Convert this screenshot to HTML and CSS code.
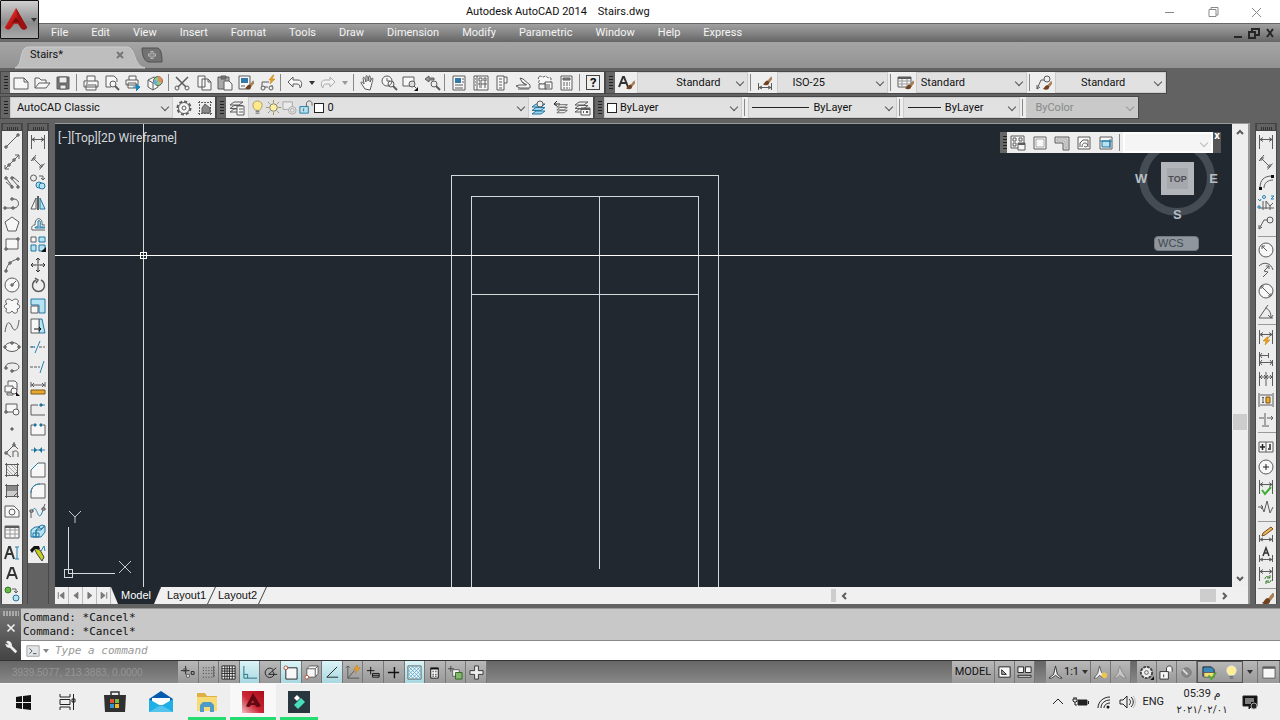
FILE: index.html
```html
<!DOCTYPE html>
<html lang="en">
<head>
<meta charset="utf-8">
<title>Autodesk AutoCAD 2014 - Stairs.dwg</title>
<link rel="stylesheet" href="styles.css">
</head>
<body>
<svg class="sprite" aria-hidden="true">
  <defs>
    <linearGradient id="red" x1="0" y1="0" x2="1" y2="1"><stop offset="0" stop-color="#f04030"/><stop offset=".5" stop-color="#c01818"/><stop offset="1" stop-color="#700808"/></linearGradient>
    <linearGradient id="redtile" x1="0" y1="1" x2="1" y2="0"><stop offset="0" stop-color="#f3bcc0"/><stop offset=".45" stop-color="#cc2636"/><stop offset="1" stop-color="#a80c1c"/></linearGradient>
  </defs>
  <symbol id="brush" viewBox="0 0 16 16"><path d="M15 3l-5 6 2 2 4-5z" fill="#b08050" stroke="#765030" stroke-width=".5"/><path d="M10 8c-3 0-3 3-6 5 4 3 9 1 8-3z" fill="#71401f" stroke="none"/></symbol>
  <symbol id="dim" viewBox="0 0 16 16"><path d="M1.5 1v14M14.5 1v14M2 5.5h12M5 3.5L2 5.5l3 2M11 3.5l3 2-3 2"/></symbol>
  <symbol id="dimlow" viewBox="0 0 16 16"><path d="M1.5 8v7M14.5 8v7M2 12.5h12M5 11l-3 1.5L5 14M11 11l3 1.5-3 1.5"/></symbol>
  <symbol id="aligned" viewBox="0 0 16 16"><path d="M3 4l9 9M1 7l5-6M9.5 15.5l5-6M3 7V4h3M12 10v3H9"/></symbol>
  <symbol id="sheets" viewBox="0 0 16 16"><path d="M1 5l4-3h9l-4 3zM1 8.5l4-3h9l-4 3zM1 12l4-3h9l-4 3z"/></symbol>
  <symbol id="alogo" viewBox="0 0 28 28"><path d="M14 1L9 10 2 22c2 3 5 3 7 0l3-4h4l3 4c2 3 5 3 7 0l-7-12z" fill="url(#red)" stroke="none"/><path d="M14 1l2 12 3 9c2 3 5 3 7 0l-7-12z" fill="#9c1212" stroke="none"/><path d="M14 11l-5 7c3-2 7-2 10 0z" fill="#7a0c0c" stroke="none"/></symbol>
</svg>

<header>
  <div class="titlebar">
    <h1>Autodesk AutoCAD 2014 &nbsp;&nbsp; Stairs.dwg</h1>
    <div class="wincontrols">
      <button aria-label="Minimize"><svg viewBox="0 0 16 16"><path d="M3 8.500h9"/></svg></button>
      <button aria-label="Restore"><svg viewBox="0 0 16 16"><path d="M4 5.500h7v7H4zM6 5V3.500h7V11h-2"/></svg></button>
      <button aria-label="Close"><svg viewBox="0 0 16 16"><path d="M4 4l9 9M13 4l-9 9"/></svg></button>
    </div>
  </div>
  <button class="appbutton" aria-label="Application menu"><svg class="a" viewBox="0 0 28 28"><use href="#alogo"/></svg><i class="tri"></i></button>
  <nav class="menubar">
    <button>File</button><button>Edit</button><button>View</button><button>Insert</button><button>Format</button><button>Tools</button><button>Draw</button><button>Dimension</button><button>Modify</button><button>Parametric</button><button>Window</button><button>Help</button><button>Express</button>
    <div class="doccontrols">
      <button aria-label="Minimize drawing"><svg viewBox="0 0 16 16"><path d="M4 12h8"/></svg></button>
      <button aria-label="Restore drawing"><svg viewBox="0 0 16 16"><path d="M3 7h6v6H3zM6 6V4h7v6h-3"/></svg></button>
      <button aria-label="Close drawing"><svg viewBox="0 0 16 16"><path d="M5 4l6 8M11 4l-6 8"/></svg></button>
    </div>
  </nav>
  <div class="filetabs">
    <svg class="tabshape" viewBox="0 0 130 22" preserveAspectRatio="none" aria-hidden="true"><path d="M0 22C8 20 4 1 13 1H112C121 1 118 20 130 22z"/></svg>
    <button class="filetab">Stairs*</button><button class="fileclose" aria-label="Close Stairs"><svg viewBox="0 0 16 16"><path d="M5 5l6 6M11 5l-6 6"/></svg></button>
    <button class="newtab" aria-label="New drawing"><svg viewBox="0 0 22 16"><path d="M1 1h15c3 0 5 4 5 14H8C4 15 1 9 1 1z" fill="#727272" stroke="#505050"/><path d="M11 4v8M7 8h8" stroke="#b5b5b5" stroke-width="3"/><path d="M11 5v6M8 8h6" stroke="#777"/></svg></button>
  </div>
</header>

<div class="toolbars">
  <div class="row">
    <div class="bar standard"><i class="grip"></i>
      <button aria-label="New"><svg viewBox="0 0 16 16"><path class="w" d="M1 3h10l4 4v7H1zM11 3v4h4"/></svg></button>
      <button aria-label="Open"><svg viewBox="0 0 16 16"><path class="w" d="M1 13V3h4l2 2h5v3M1 13l4-5h11l-4 5z"/></svg></button>
      <button aria-label="Save"><svg viewBox="0 0 16 16"><path d="M2 2h12v12H2z" fill="#777"/><path d="M4 2h8v6H4zM5 10h6v4H5z" fill="#eee"/></svg></button>
      <i class="sep"></i>
      <button aria-label="Plot"><svg viewBox="0 0 16 16"><path class="w" d="M4 6V1h8v5M1 6h14v6H1zM3 10h10v5H3zM3 8h2"/></svg></button>
      <button aria-label="Plot preview"><svg viewBox="0 0 16 16"><path class="w" d="M13 7V4l-3-3H2v11h5"/><circle cx="9" cy="9" r="3"/><path d="M11 11l4 4" stroke-width="2"/></svg></button>
      <button aria-label="Publish"><svg viewBox="0 0 16 16"><path class="w" d="M4 5V1h7v4M1 5h12v5H1zM3 8h8v5H3z"/><path d="M8 12h5M11 9l4 3-4 4" fill="#1786bd" stroke="#1786bd"/></svg></button>
      <button aria-label="3D print"><svg viewBox="0 0 16 16"><path class="w" d="M1 5l6-3 4 2v8l-5 3-5-3zM1 5l5 3v7"/><circle cx="11" cy="6" r="4.500" fill="#8bcf80"/><path d="M11 1a5 5 0 0 1 4 7l-4-2z" fill="#e28a60" stroke="none"/><path d="M7 5a4 4 0 0 0 2 5l2-4z" fill="#70a8e0" stroke="none"/></svg></button>
      <i class="sep"></i>
      <button aria-label="Cut"><svg viewBox="0 0 16 16"><path d="M2 2l10 10M14 2L4 12" stroke-width="1.500"/><circle cx="3" cy="13" r="2"/><circle cx="13" cy="13" r="2"/></svg></button>
      <button aria-label="Copy"><svg viewBox="0 0 16 16"><path class="w" d="M2 1h7v11H2zM6 4h6l3 3v8H6zM12 4v3h3"/></svg></button>
      <button aria-label="Paste"><svg viewBox="0 0 16 16"><path d="M1 2h11v12H1z" fill="#aaa"/><path d="M4 1h5v3H4z" fill="#777"/><path class="w" d="M7 6h5l3 3v6H7z"/></svg></button>
      <button aria-label="Match properties"><svg viewBox="0 0 16 16"><path class="w" d="M1 1h11v13H1z"/><path d="M3 3h7v5H3z" fill="#3478a8" stroke="none"/><path d="M3 11h4"/><use href="#brush" x="4" y="3" width="12" height="13"/></svg></button>
      <button aria-label="Block editor"><svg viewBox="0 0 16 16"><path d="M9 7H2v5h6M12 10v4"/><circle cx="3" cy="13" r="2" fill="#eee"/><circle cx="11" cy="13" r="2" fill="#eee"/><path d="M13 0L9 5h2l-1 4 5-5h-3l2-4z" class="o"/></svg></button>
      <i class="sep"></i>
      <button aria-label="Undo"><svg viewBox="0 0 16 16"><path class="w" d="M1 7l5-5v3h5c5 0 4 7 2 8 0-3-1-4-3-4H6v3z"/></svg></button>
      <button class="drop" aria-label="Undo list"><i class="tri"></i></button>
      <button class="off" aria-label="Redo"><svg viewBox="0 0 16 16"><path class="w" d="M15 7l-5-5v3H5C0 5 1 12 3 13c0-3 1-4 3-4h4v3z"/></svg></button>
      <button class="drop off" aria-label="Redo list"><i class="tri"></i></button>
      <i class="sep"></i>
      <button aria-label="Pan"><svg viewBox="0 0 16 16"><path class="w" d="M5 14L1 8c0-2 2-1 3 1L3 3c1-2 2 0 3 4V1c1-1 2 0 2 5l1-5c2-1 1 2 1 6l2-4c2 0 0 4-1 9l-1 3z"/></svg></button>
      <button aria-label="Zoom realtime"><svg viewBox="0 0 16 16"><circle class="w" cx="6" cy="6" r="5"/><path d="M6 3v3h3"/><circle cx="10" cy="9" r="3"/><path d="M12 11l4 4" stroke-width="2"/></svg></button>
      <button aria-label="Zoom window"><svg viewBox="0 0 16 16"><path class="w" d="M1 2h11v9H1z"/><circle cx="10" cy="9" r="3" fill="#ddd"/><path d="M12 11l2 2"/><path class="k" d="M16 12v4h-4z"/></svg></button>
      <button aria-label="Zoom previous"><svg viewBox="0 0 16 16"><path d="M1 4l4-3v2h5v2H5v2z" fill="#999"/><circle cx="10" cy="9" r="3"/><path d="M12 11l4 4" stroke-width="2"/></svg></button>
      <i class="sep"></i>
      <button aria-label="Properties"><svg viewBox="0 0 16 16"><path class="w" d="M2 1h12v14H2z"/><path d="M4 3h6v5H4z" fill="#3478a8" stroke="none"/><path d="M11 4h2M11 7h2M4 10h8M4 13h8"/></svg></button>
      <button aria-label="DesignCenter"><svg viewBox="0 0 16 16"><path class="w" d="M1 1h14v14H1zM4 1v14"/><path d="M6 3h3v3H6zM11 3h2v3h-2zM6 8h3v2H6zM11 8h2v2h-2zM6 12h3M11 12h2M2 4h1M2 7h1M2 10h1"/></svg></button>
      <button aria-label="Tool palettes"><svg viewBox="0 0 16 16"><path class="w" d="M3 1h7v14H3zM10 2h3v6h-3"/><path d="M5 4h3M5 7h3M5 10h3M5 13h3"/></svg></button>
      <button aria-label="Sheet set manager"><svg viewBox="0 0 16 16"><path class="w" d="M1 11l4 2h10v-3L8 4 5 3l2 4 4 3H4z"/><path d="M3 14h11M7 7l5 3"/></svg></button>
      <button aria-label="Markup set manager"><svg viewBox="0 0 16 16"><path class="w" d="M2 2c1-2 3 0 4 0s3-2 4 0 4-1 4 2-1 3 0 5H3c-3-1 0-3-1-4s-1-2 0-3z" stroke-dasharray="3 1"/><path class="w" d="M2 9h7v5H2zM8 7h7v7H8zM10 10h3M10 12h3"/></svg></button>
      <button aria-label="Calculator"><svg viewBox="0 0 16 16"><path class="w" d="M3 1h11v14H3z"/><path d="M5 3h7v2H5z" fill="#888"/><path d="M5 8h2M8 8h2M11 8h1M5 10h2M8 10h2M11 10h1M5 13h2M8 13h2M11 13h1"/></svg></button>
      <i class="sep"></i>
      <button aria-label="Help"><span class="helpkey">?</span></button>
    </div>
    <div class="bar styles"><i class="grip"></i>
      <button aria-label="Text style"><svg viewBox="0 0 16 16"><path d="M1 12L5 2h1l4 10M3 8h5" stroke="#333" stroke-width="2"/><use href="#brush" x="5" y="3" width="12" height="13"/></svg></button>
      <label class="combo indent"><select aria-label="Text style"><option>Standard</option></select></label><i class="sep"></i>
      <button aria-label="Dimension style"><svg viewBox="0 0 16 16"><use href="#dimlow"/><use href="#brush" x="3" y="-1" width="12" height="13"/></svg></button>
      <label class="combo dimstyle"><select aria-label="Dimension style"><option>ISO-25</option></select></label><i class="sep"></i>
      <button aria-label="Table style"><svg viewBox="0 0 16 16"><path class="w" d="M1 2h13v10H1z"/><path d="M1 6h13M1 9h13M5 4v8M10 4v8" stroke="#999"/><path d="M1 3h13" stroke-width="2"/><use href="#brush" x="5" y="3" width="12" height="13"/></svg></button>
      <label class="combo"><select aria-label="Table style"><option>Standard</option></select></label><i class="sep"></i>
      <button aria-label="Multileader style"><svg viewBox="0 0 16 16"><path d="M1 14L5 5h3M1 10v4l3-2"/><circle cx="11" cy="4" r="3" fill="#eee"/><use href="#brush" x="4" y="4" width="12" height="12"/></svg></button>
      <label class="combo leader"><select aria-label="Multileader style"><option>Standard</option></select></label>
    </div>
  </div>
  <div class="row">
    <div class="bar workspace"><i class="grip"></i>
      <label class="combo"><select aria-label="Workspace"><option>AutoCAD Classic</option></select></label>
      <button aria-label="Workspace settings"><svg viewBox="0 0 16 16"><circle cx="8" cy="8" r="6.500" stroke-dasharray="3 2" stroke-width="2"/><circle class="w" cx="8" cy="8" r="5.500"/><circle cx="8" cy="8" r="2"/></svg></button>
      <button aria-label="My workspace"><svg viewBox="0 0 16 16"><path d="M1 2.500h14M1 13.500h14M2.500 1v14M13.500 1v14" stroke-dasharray="2 1"/><path d="M5 13V8l3-4 5 4v5z" fill="#888"/></svg></button>
    </div>
    <div class="bar layers"><i class="grip"></i>
      <button aria-label="Layer properties"><svg viewBox="0 0 16 16"><use href="#sheets"/><path class="w" d="M8 6h7v9H8zM10 9h4M10 12h4"/></svg></button>
      <div class="combo layer">
        <svg viewBox="0 0 16 16"><path d="M6 11C1 7 3 1 8 1s7 6 2 10z" fill="#ffe98c" stroke="#a99960"/><path d="M6 12h4M6 14h4"/></svg>
        <svg viewBox="0 0 16 16"><circle cx="8" cy="8" r="4" fill="#fff0a0" stroke="#777"/><path d="M8 0v3M8 13v3M0 8h3M13 8h3M2 2l2 2M12 12l2 2M14 2l-2 2M4 12l-2 2" stroke="#a09050"/></svg>
        <svg class="off" viewBox="0 0 16 16"><path class="w" d="M1 2h10v8H1z"/><circle class="w" cx="11" cy="11" r="4"/><circle cx="11" cy="11" r="2"/></svg>
        <svg viewBox="0 0 16 16"><path class="bf" d="M2 7h9v7H2z"/><path d="M9 7V4c0-4 6-4 6 0v2M6 9v3"/></svg>
        <i class="swatch"></i><select aria-label="Layer"><option>0</option></select>
      </div>
      <button aria-label="Make layer current"><svg viewBox="0 0 16 16"><g stroke="#2677a0" fill="#9bd2ec"><use href="#sheets" y="2"/></g><circle cx="9" cy="4" r="3" fill="#eee"/></svg></button>
      <button aria-label="Layer previous"><svg viewBox="0 0 16 16"><use href="#sheets" x="3" y="3" width="13" height="13"/><path d="M7 4H1l3-3M1 4l3 2" stroke="#222"/></svg></button>
      <button aria-label="Layer states"><svg viewBox="0 0 16 16"><use href="#sheets"/><path class="w" d="M7 8h9v7H7z"/><path d="M7 9h9M9 12h1M12 12h2" stroke-width="2"/></svg></button>
    </div>
    <div class="bar props"><i class="grip"></i>
      <label class="combo p1"><i class="swatch"></i><select aria-label="Color"><option>ByLayer</option></select></label><i class="sep"></i>
      <label class="combo p2"><i class="ltype long"></i><select aria-label="Linetype"><option>ByLayer</option></select></label><i class="sep"></i>
      <label class="combo p3"><i class="ltype"></i><select aria-label="Lineweight"><option>ByLayer</option></select></label><i class="sep"></i>
      <label class="combo p4 disabled"><select aria-label="Plot style" disabled><option>ByColor</option></select></label>
    </div>
  </div>
</div>

<main>
  <div class="tools" role="toolbar" aria-label="Draw"><i class="tophandle"></i>
    <button aria-label="Line"><svg viewBox="0 0 16 16"><path d="M2 14L14 2"/><path class="n" d="M1 13h2v2H1zM13 1h2v2h-2z"/></svg></button>
    <button aria-label="Construction line"><svg viewBox="0 0 16 16"><path d="M1 15L15 1M1 11v4h4M11 1h4v4"/><path class="n" d="M4 10h2v2H4zM9 5h2v2H9z"/></svg></button>
    <button aria-label="Multiline"><svg viewBox="0 0 16 16"><path d="M2 4l6 8M7 4l7 8M2 8l6 5M9 3l6 5"/><path class="n" d="M1 3h2v2H1zM7 12h2v2H7zM7 3h2v2H7zM13 12h2v2h-2z"/></svg></button>
    <button aria-label="Polyline"><svg viewBox="0 0 16 16"><path d="M1 13h9c6 0 6-9 0-9H8"/><path class="n" d="M0 12h2v2H0zM8 12h2v2H8zM7 3h2v2H7z"/></svg></button>
    <button aria-label="Polygon"><svg viewBox="0 0 16 16"><path class="w" d="M8 1l7 5-3 9H4L1 6z"/></svg></button>
    <button aria-label="Rectangle"><svg viewBox="0 0 16 16"><path class="w" d="M2 3h12v10H2z"/><path class="n" d="M1 12h2v2H1zM13 2h2v2h-2z"/></svg></button>
    <button aria-label="Arc"><svg viewBox="0 0 16 16"><path d="M2 14C3 8 6 4 14 2"/><path class="n" d="M1 13h2v2H1zM5 5h2v2H5zM13 1h2v2h-2z"/></svg></button>
    <button aria-label="Circle"><svg viewBox="0 0 16 16"><circle class="w" cx="8" cy="8" r="7"/><path d="M8 8l4-4"/><path class="n" d="M7 7h2v2H7z"/></svg></button>
    <button aria-label="Revision cloud"><svg viewBox="0 0 16 16"><path class="w" d="M3 6C-1 2 5-1 8 3c3-4 9-1 5 3 4 1 3 5 0 5 2 4-3 6-5 2-3 4-8 1-5-2-4-1-3-5 0-5z"/></svg></button>
    <button aria-label="Spline"><svg viewBox="0 0 16 16"><path d="M1 14C3 1 6 4 8 9s6 4 7-7"/></svg></button>
    <button aria-label="Ellipse"><svg viewBox="0 0 16 16"><ellipse class="w" cx="8" cy="8" rx="7" ry="4.500"/><path class="n" d="M0 7h2v2H0zM14 7h2v2h-2zM7 3h2v2H7z"/></svg></button>
    <button aria-label="Ellipse arc"><svg viewBox="0 0 16 16"><path d="M2 9C-1 3 15 2 15 8c0 3-4 4-7 4"/><path class="n" d="M1 8h2v2H1zM7 11h2v2H7z"/></svg></button>
    <button aria-label="Insert block"><svg viewBox="0 0 16 16"><path class="w" d="M4 5V1h7l2 2v7H9M1 6h8v6H1zM3 13h6v2H3z"/><circle class="w" cx="10" cy="11" r="3"/><path class="k" d="M12 12l4 4h-4z"/></svg></button>
    <button aria-label="Make block"><svg viewBox="0 0 16 16"><path class="w" d="M2 3h11v8H2z"/><circle class="w" cx="12" cy="11" r="3"/><path class="n" d="M1 10h2v2H1z"/></svg></button>
    <button aria-label="Point"><svg viewBox="0 0 16 16"><path d="M7 7h2v2H7z" fill="#777"/></svg></button>
    <button aria-label="Divide"><svg viewBox="0 0 16 16"><path d="M2 11l8-8 4 4M2 11l5 4M10 3V0M9 15V9M9 10c2-2 5-1 5 1v4"/><path class="n" d="M1 10h2v2H1zM9 2h2v2H9z"/></svg></button>
    <button aria-label="Hatch"><svg viewBox="0 0 16 16"><path d="M3 7l6 6M3 3l10 10M7 3l6 6M3 10l3 3M10 3l3 3" stroke="#aaa"/><path d="M1 2.500h14M1 13.500h14M2.500 1v14M13.500 1v14M9 14l5-5"/></svg></button>
    <button aria-label="Gradient"><svg viewBox="0 0 16 16"><path d="M3 3h10v5H3z" fill="#888" stroke="none"/><path d="M3 8h10v5H3z" fill="#ccc" stroke="none"/><path d="M1 2.500h14M1 13.500h14M2.500 1v14M13.500 1v14M9 14l5-5"/></svg></button>
    <button aria-label="Region"><svg viewBox="0 0 16 16"><path class="w" d="M1 3h9l5 5v6H1z"/><circle cx="8" cy="9" r="3"/></svg></button>
    <button aria-label="Table"><svg viewBox="0 0 16 16"><path class="w" d="M1 2h14v12H1z"/><path d="M1 6h14M1 10h14M6 3v11M11 3v11" stroke="#999"/><path d="M1 3h14" stroke-width="2"/></svg></button>
    <button aria-label="Multiline text"><svg viewBox="0 0 16 16"><path d="M1 14L5 2h1l4 12M3 9h6" stroke="#333" stroke-width="2"/><path class="b" d="M13 2v12M11 2h4M11 14h4"/></svg></button>
    <button aria-label="Single line text"><svg viewBox="0 0 16 16"><path d="M3 14L7 3h2l4 11M5 10h6" stroke="#333" stroke-width="2"/></svg></button>
    <button aria-label="Add selected"><svg viewBox="0 0 16 16"><circle cx="4" cy="4" r="3" fill="#67b847" stroke="#397d27"/><circle class="bf" cx="12" cy="12" r="3"/><path d="M8 3h4v4M10 5l2 2 2-2"/></svg></button>
  </div>
  <div class="tools" role="toolbar" aria-label="Modify"><i class="tophandle"></i>
    <button aria-label="Linear dimension"><svg viewBox="0 0 16 16"><use href="#dim" y="1"/></svg></button>
    <button aria-label="Aligned dimension"><svg viewBox="0 0 16 16"><use href="#aligned"/></svg></button>
    <button aria-label="Copy object"><svg viewBox="0 0 16 16"><circle cx="3.500" cy="4" r="3"/><circle class="bf" cx="9" cy="11" r="3"/><circle class="bf" cx="12" cy="12" r="3"/><path d="M9 2h4v4M11 4l2 2 2-2"/></svg></button>
    <button aria-label="Mirror"><svg viewBox="0 0 16 16"><path class="w" d="M6 3v11H1z"/><path class="bf" d="M10 3v11h5z"/><path d="M8 1v14" stroke-width="2"/></svg></button>
    <button aria-label="Offset"><svg viewBox="0 0 16 16"><path class="w" d="M15 14H2c-1-4 1-5 3-5 0-9 8-8 7 0h3"/><path class="bf" d="M15 12H5c0-2 2-1 3-1V5c2-2 3 1 2 6h5"/></svg></button>
    <button aria-label="Array"><svg viewBox="0 0 16 16"><path class="w" d="M1 1h5v5H1z"/><path class="bf" d="M9 1h6v5H9zM1 9h5v6H1zM9 9h6v4l-3 2H9z"/><path class="k" d="M16 11v5h-5z"/></svg></button>
    <button aria-label="Move"><svg viewBox="0 0 16 16"><path d="M8 1v5M8 10v5M1 8h5M10 8h5M6 3l2-2 2 2M6 13l2 2 2-2M3 6L1 8l2 2M13 6l2 2-2 2" stroke="#333"/><path d="M7 7h2v2H7z"/></svg></button>
    <button aria-label="Rotate"><svg viewBox="0 0 16 16"><path d="M6 3a6 6 0 1 0 5 0M5 1l3 2-2 3" stroke-width="1.500"/></svg></button>
    <button aria-label="Scale"><svg viewBox="0 0 16 16"><path class="bf" d="M1 1h14v14H9V7H1z"/><path class="w" d="M1 8h7v7H1z"/></svg></button>
    <button aria-label="Stretch"><svg viewBox="0 0 16 16"><path class="bf" d="M9 1h3l3 14H9z"/><path class="w" d="M1 1h8v14H1z"/><path d="M4 11h7M9 9l2 2-2 2" stroke="#111"/></svg></button>
    <button aria-label="Trim"><svg viewBox="0 0 16 16"><path d="M0 8h5M9 8h6" stroke-dasharray="3 1"/><path class="b" d="M5 14L10 2M1 8h4"/></svg></button>
    <button aria-label="Extend"><svg viewBox="0 0 16 16"><path d="M0 8h10" stroke-dasharray="3 1"/><path class="b" d="M10 14l4-12"/></svg></button>
    <button aria-label="Measure"><svg viewBox="0 0 16 16"><path d="M1 2v5M15 2v5M1 5h14M4 3L2 5l2 2M12 3l2 2-2 2"/><path d="M1 10h14v4H1z" fill="#e8a82b" stroke="#7a5a18"/></svg></button>
    <button aria-label="Break at point"><svg viewBox="0 0 16 16"><path d="M8 4H1v10h14"/><path class="b" d="M10 4h5"/><path class="n bl" d="M10 3h2v2h-2z"/></svg></button>
    <button aria-label="Break"><svg viewBox="0 0 16 16"><path class="w" d="M3 4H1v10h14V4h-2"/><path class="n bl" d="M4 3h2v2H4zM10 3h2v2h-2z"/></svg></button>
    <button aria-label="Join"><svg viewBox="0 0 16 16"><path class="b" d="M1 8h14"/><path d="M4 5l3 3-3 3zM12 5L9 8l3 3z" fill="#1e7195" stroke="none"/></svg></button>
    <button aria-label="Chamfer"><svg viewBox="0 0 16 16"><path class="w" d="M1 15V8l7-7h7v14z"/><path class="b" d="M1 8l7-7"/></svg></button>
    <button aria-label="Fillet"><svg viewBox="0 0 16 16"><path class="w" d="M1 15v-5C1 4 5 1 10 1h5v14z"/><path class="b" d="M1 10c0-6 4-9 9-9"/></svg></button>
    <button aria-label="Blend curves"><svg viewBox="0 0 16 16"><path class="b" d="M2 8c5-9 5 9 9 4l3-7"/><path d="M1 15V8M15 1l-2 5"/><path class="n" d="M0 7h3v2H0zM12 5h3v2h-3z"/></svg></button>
    <button aria-label="Explode"><svg viewBox="0 0 16 16"><path class="bf" d="M1 6l4-3h5L6 6v7H1zM6 6h5l4-4v6l-4 5H6zM8 3l4-2 3 1-4 3zM3 9h6v4H3z"/></svg></button>
    <button aria-label="Edit"><svg viewBox="0 0 16 16"><path d="M4 3l3 6 5 7 2-4-4-7z" fill="#c7cf21" stroke="#444"/><path class="k" d="M0 5l4-4h5l1 3H5L2 8z"/><path class="b" d="M11 6l3-5 1 5"/></svg></button>
  </div>

  <section class="drawing">
    <div class="canvas">
      <svg class="plan" viewBox="0 0 1177 463" preserveAspectRatio="xMinYMin slice" role="img" aria-label="Stair plan">
        <g class="lines">
          <path d="M396.500 463V51.500H663.500V463M416 463V72.500H643.500V463M416.500 170.500H643.500M544.500 72V445"/>
          <path d="M88.500 0V463"/><path d="M0 131.500H1177" stroke="#fff"/><path d="M85.500 128.500h6v6h-6z" stroke="#fff"/>
          <path d="M13.500 403V449.500H60M9.500 445.500h8v8h-8z"/>
        </g>
        <path class="axis" d="M14 387l6 6 6-6M20 393v6M64 437l12 12M76 437l-12 12"/>
      </svg>
      <div class="viewlabel"><button>[−]</button><button>[Top]</button><button>[2D Wireframe]</button></div>
      <div class="viewcube">
        <svg viewBox="0 0 90 76" aria-hidden="true"><circle cx="45" cy="33" r="34"/></svg>
        <button class="top">TOP</button><b class="west">W</b><b class="east">E</b><b class="south">S</b>
      </div>
      <button class="wcs">WCS</button>
      <div class="viewports"><i class="grip"></i>
        <button aria-label="Viewports dialog"><svg viewBox="0 0 16 16"><path class="w" d="M1 1h13v12H1z"/><path d="M3 3h3v3H3zM9 3h3v3H9zM3 8h3v3H3z"/><path class="w" d="M8 8h7v7H8z"/><path d="M8 9h7" stroke-width="2"/></svg></button>
        <button aria-label="Single viewport"><svg viewBox="0 0 16 16"><path class="w" d="M2 2h12v12H2z"/><path d="M4 4h8v8H4z" stroke="#aaa"/></svg></button>
        <button aria-label="Polygonal viewport"><svg viewBox="0 0 16 16"><path d="M1 2h14v13H9V8H1z" fill="#ddd"/><path d="M3 4h10v9h-2V6H3z" stroke="#aaa"/></svg></button>
        <button aria-label="Object viewport"><svg viewBox="0 0 16 16"><path class="w" d="M2 2h12v12H2z"/><path d="M4 12V8l3-3h5v7M6 12c0-4 3-5 5-3s-2 4-3 2"/></svg></button>
        <button aria-label="Clip viewport"><svg viewBox="0 0 16 16"><path class="w" d="M2 2h12v12H2z"/><path class="bf" d="M4 6h8v6H4zM2 6h12M12 4v9"/></svg></button>
        <i class="sep"></i>
        <label class="combo white"><select aria-label="Viewport scale" disabled><option></option></select></label>
        <button class="closex" aria-label="Close toolbar">x</button>
      </div>
    </div>
    <div class="vscroll">
      <button aria-label="Scroll up"><svg viewBox="0 0 16 16"><path d="M5 10l3-3 3 3"/></svg></button>
      <i class="thumb"></i>
      <button aria-label="Scroll down"><svg viewBox="0 0 16 16"><path d="M5 6l3 3 3-3"/></svg></button>
    </div>
    <div class="layouts">
      <div class="navs">
        <button aria-label="First"><svg viewBox="0 0 16 16"><path d="M4 4v8"/><path d="M11 4v8L6 8z" class="g"/></svg></button>
        <button aria-label="Previous"><svg viewBox="0 0 16 16"><path d="M11 4v8L6 8z" class="g"/></svg></button>
        <button aria-label="Next"><svg viewBox="0 0 16 16"><path d="M6 4v8l5-4z" class="g"/></svg></button>
        <button aria-label="Last"><svg viewBox="0 0 16 16"><path d="M12 4v8"/><path d="M5 4v8l5-4z" class="g"/></svg></button>
      </div>
      <button class="ltab model">Model</button><button class="ltab">Layout1</button><button class="ltab">Layout2</button>
      <div class="hscroll">
        <i class="split"></i>
        <button class="left" aria-label="Scroll left"><svg viewBox="0 0 16 16"><path d="M10 5L7 8l3 3"/></svg></button>
        <i class="thumb"></i>
        <button aria-label="Scroll right"><svg viewBox="0 0 16 16"><path d="M7 5l3 3-3 3"/></svg></button>
      </div>
    </div>
  </section>

  <div class="tools dims" role="toolbar" aria-label="Dimension"><i class="tophandle"></i>
    <button aria-label="Linear"><svg viewBox="0 0 16 16"><use href="#dim" y="1"/></svg></button>
    <button aria-label="Aligned"><svg viewBox="0 0 16 16"><use href="#aligned"/></svg></button>
    <button aria-label="Arc length"><svg viewBox="0 0 16 16"><path d="M2 14C2 6 6 2 14 2M6 14c0-5 4-8 9-8"/><path class="k" d="M1 13h3v3H1zM13 1h3v3h-3z"/></svg></button>
    <button aria-label="Ordinate"><svg viewBox="0 0 16 16"><path d="M5 6v9M1 13h15M8 6v8M8 6l4 5 3-3M12 11v4"/><circle class="b" cx="6" cy="2" r="1.500"/><path class="b" d="M0 4l2 2 1-2M13 1h3l-3 3h3M0 11h2v2H0z"/></svg></button>
    <button aria-label="Leader"><svg viewBox="0 0 16 16"><path d="M1 14L6 5h4M1 10v4l3-2"/><circle cx="12" cy="5" r="3"/></svg></button>
    <hr>
    <button aria-label="Radius"><svg viewBox="0 0 16 16"><circle class="w" cx="8" cy="8" r="7"/><path d="M9 9L4 4M4 7V4h3"/></svg></button>
    <button aria-label="Jogged"><svg viewBox="0 0 16 16"><path d="M1 4c5-5 12-3 14 4M5 15l5-5-4-1 5-5M8 4h3v3"/></svg></button>
    <button aria-label="Diameter"><svg viewBox="0 0 16 16"><circle class="w" cx="8" cy="8" r="7"/><path d="M3 3l10 10M3 6V3h3M13 10v3h-3"/></svg></button>
    <button aria-label="Angular"><svg viewBox="0 0 16 16"><path d="M15 14H1L10 1M7 4c4 1 6 4 6 10M10 11l3 3 2-3"/></svg></button>
    <hr>
    <button aria-label="Quick dimension"><svg viewBox="0 0 16 16"><use href="#dim" y="-1"/><path class="o" d="M9 7l-4 4h3l-1 4 5-5H9l2-3z"/></svg></button>
    <button aria-label="Baseline"><svg viewBox="0 0 16 16"><path d="M1.500 1v14M10.500 2v5M14.500 9v6M2 4.500h8M2 11.500h12M4 2L2 4.500 4 7M12 9l2 2.500-2 2.500M4 9l-2 2.500L4 14"/></svg></button>
    <button aria-label="Continue"><svg viewBox="0 0 16 16"><path d="M1.500 1v14M8 1v14M14.500 1v14M2 6h12M4 4L2 6l2 2M6 4l2 2-2 2M10 4L8 6l2 2M12 4l2 2-2 2"/></svg></button>
    <button aria-label="Dimension space"><svg viewBox="0 0 16 16"><path d="M1 1v14M15 1v14M2 3h12M2 13h12M5 5v6M4 6l1-1 1 1M4 10l1 1 1-1"/><path d="M8 5h4v6H8z" fill="#edac20" stroke="#765020"/></svg></button>
    <button aria-label="Dimension break"><svg viewBox="0 0 16 16"><path d="M1 6h5M9 6h6M13 4l2 2-2 2M7 1v12M4 14h7" /></svg></button>
    <hr>
    <button aria-label="Tolerance"><svg viewBox="0 0 16 16"><path class="w" d="M1 3h14v10H1zM8 3v10"/><path d="M2 8h5M4.500 5v6M12 5v6M10 10h1" stroke="#222" stroke-width="1.500"/></svg></button>
    <button aria-label="Center mark"><svg viewBox="0 0 16 16"><circle class="w" cx="8" cy="8" r="7"/><path d="M8 5v6M5 8h6" stroke="#222"/></svg></button>
    <button aria-label="Inspection"><svg viewBox="0 0 16 16"><use href="#dim" y="-1"/><path d="M4 10l3 4 6-7" stroke="#3cae2e" stroke-width="2"/></svg></button>
    <button aria-label="Jogged linear"><svg viewBox="0 0 16 16"><path d="M0 7h4l2 5 3-11 3 12 3-6M3 5l2 2-2 2"/></svg></button>
    <hr>
    <button aria-label="Dimension edit"><svg viewBox="0 0 16 16"><use href="#dimlow"/><path d="M4 9l1-3 8-6 2 2-8 6z" fill="#eeb45b" stroke="#765020"/></svg></button>
    <button aria-label="Dimension text edit"><svg viewBox="0 0 16 16"><use href="#dimlow"/><path d="M5 9l3-8 3 8M6 6h4" stroke="#333" stroke-width="1.500"/></svg></button>
    <button aria-label="Dimension update"><svg viewBox="0 0 16 16"><use href="#dim" y="-2"/><path d="M7 11c0-3 4-3 5-1M12 7v3H9M13 12c0 3-4 3-5 1M8 16v-3h3" stroke="#397d27"/></svg></button>
    <hr>
    <button class="cut" aria-label="Dimension style"><svg viewBox="0 0 16 16"><use href="#brush"/></svg></button>
  </div>
</main>

<section class="command">
  <div class="cmdside">
    <i class="dots"></i>
    <button aria-label="Close command line"><svg viewBox="0 0 16 16"><path d="M4 4l8 8M12 4l-8 8" stroke-width="2"/></svg></button>
    <button aria-label="Customize"><svg viewBox="0 0 16 16"><path d="M6 6l8 8" stroke-width="3"/><path d="M3 2l3 2v3l-3-1a3 3 0 0 0 5 1 4 4 0 0 0-4-5" stroke-width="2"/></svg></button>
  </div>
  <div class="cmdmain">
    <div class="history"><p>Command: *Cancel*</p><p>Command: *Cancel*</p></div>
    <div class="prompt"><button aria-label="Recent commands"><svg viewBox="0 0 16 16"><path d="M1 2h14v12H1z" fill="#e3e6e8" stroke="#999"/><path d="M4 5l3 3-3 3M8 11h4" stroke="#444"/></svg><i class="tri"></i></button><input aria-label="Command" placeholder="Type a command"></div>
  </div>
</section>

<footer class="status">
  <span class="coords">3939.5077, 213.3883, 0.0000</span>
  <div class="modes">
    <button aria-label="Infer constraints"><svg viewBox="0 0 16 16"><path d="M1 6h9M6 1v9M12 10V7h3v3z" stroke="#222"/><path class="w" d="M7 10h3v3H7z"/><path d="M4 4h3v3H4z"/></svg></button>
    <button aria-label="Snap"><svg viewBox="0 0 16 16"><path d="M2 3h10M2 6h10M2 9h10M2 13h12M14 2v11" stroke="#333" stroke-dasharray="1 2"/><path d="M13.500 1v12"/></svg></button>
    <button aria-label="Grid"><svg viewBox="0 0 16 16"><path class="w" d="M1 1h14v14H1zM1 4h14M1 6.500h14M1 9h14M1 12h14M4 1v14M6.500 1v14M9 1v14M12 1v14" stroke="#222"/></svg></button>
    <button class="on" aria-label="Ortho"><svg viewBox="0 0 16 16"><path d="M2 1v13h14M2 10h4v4" stroke="#246e82"/></svg></button>
    <button aria-label="Polar tracking"><svg viewBox="0 0 16 16"><path d="M12 10a5 5 0 1 1-1-5M6 10l8-7M6 10h9M10 6l2 4" stroke="#222"/></svg></button>
    <button class="on" aria-label="Object snap"><svg viewBox="0 0 16 16"><path class="w" d="M3 3h12v12H3z" stroke="#222"/><circle cx="3" cy="3" r="2" fill="#fff" stroke="#b04a30"/></svg></button>
    <button aria-label="3D object snap"><svg viewBox="0 0 16 16"><path class="w" d="M3 4l3-3h9v8l-3 4H3zM3 4h9v9M12 4l3-3"/><circle cx="3" cy="13" r="2" fill="#fff" stroke="#b04a30"/></svg></button>
    <button class="on" aria-label="Object snap tracking"><svg viewBox="0 0 16 16"><path d="M14 2L3 13h12" stroke="#222"/></svg></button>
    <button aria-label="Dynamic UCS"><svg viewBox="0 0 16 16"><path d="M3 1v13h12M3 14l7-8M1 3l2-2 2 2" stroke="#555"/><path class="o" d="M13 0L9 5h3l-1 4 5-6h-3z"/></svg></button>
    <button aria-label="Dynamic input"><svg viewBox="0 0 16 16"><path d="M1 6h8M5 2v8M7 9h7v4H7zM7 11h7" stroke="#111"/></svg></button>
    <button aria-label="Lineweight"><svg viewBox="0 0 16 16"><path d="M2 8h12M9 2v12" stroke="#111" stroke-width="1.500"/></svg></button>
    <button class="on" aria-label="Transparency"><svg viewBox="0 0 16 16"><path d="M1 1h14v14H1z" fill="#eaf8fc"/><path d="M1 5l10 10M1 9l6 6M1 1l14 14M5 1l10 10M9 1l6 6M15 1L1 15M11 1L1 11M15 5L5 15M15 9l-6 6M7 1L1 7" stroke="#69aecb"/></svg></button>
    <button aria-label="Quick properties"><svg viewBox="0 0 16 16"><path class="w" d="M4 3h8v11H4z" stroke="#111"/><path d="M4 4h8M6 7h1M9 7h1M6 10h1M9 10h1M6 12h1M9 12h1" stroke="#111" stroke-width="1.500"/></svg></button>
    <button aria-label="Selection cycling"><svg viewBox="0 0 16 16"><path d="M0 4h6M3 1v6M6 4v5h3" stroke="#444"/><path class="w" d="M5 5h7v7H5z"/><path d="M8 8h7v7H8z" fill="#85b66e" stroke="#326624"/></svg></button>
    <button aria-label="Annotation monitor"><svg viewBox="0 0 16 16"><path d="M6 1h4v5h5v4h-5v5H6v-5H1V6h5z" fill="#eee" stroke="#333"/></svg></button>
  </div>
  <div class="statusright">
    <button class="modelbtn">MODEL</button>
    <button aria-label="Quick view layouts"><svg viewBox="0 0 16 16"><path class="w" d="M2 2h12v11H2zM5 5v5h5z" stroke="#222"/></svg></button>
    <button aria-label="Quick view drawings"><svg viewBox="0 0 16 16"><path class="w" d="M1 2h6v6H1zM9 2h6v6H9zM1 11h14v2H1z" stroke="#222"/></svg></button>
    <i class="space"></i>
    <button class="scale"><svg viewBox="0 0 16 16"><path class="w" d="M8 1L6 10l-5 4h3l4-3 4 3h3l-5-4z" stroke="#333"/></svg>1:1<i class="tri"></i></button>
    <button aria-label="Annotation visibility"><svg viewBox="0 0 16 16"><path class="w" d="M7 1L5 9l-4 5h3l3-3 4 3 1-3-3-3z"/><circle cx="12" cy="11" r="3" fill="#f0c650" stroke="none"/></svg></button>
    <button class="off" aria-label="Auto scale"><svg viewBox="0 0 16 16"><path class="w" d="M7 1L5 9l-4 5h3l3-3 4 3h3l-4-6z"/></svg></button>
    <i class="space thin"></i>
    <button aria-label="Workspace switching"><svg viewBox="0 0 16 16"><circle cx="8" cy="8" r="6" fill="#eee" stroke="#444" stroke-width="2" stroke-dasharray="3 1"/><circle cx="8" cy="8" r="2"/><path class="k" d="M16 12v4h-4z"/></svg></button>
    <button aria-label="Lock toolbars"><svg viewBox="0 0 16 16"><path class="w" d="M1 7h9v8H1zM8 7V4c0-4 6-4 6 0v3M5 10v3" stroke="#333"/></svg></button>
    <button aria-label="Hardware acceleration"><svg viewBox="0 0 16 16"><circle cx="8" cy="8" r="5" fill="#888" stroke="#777"/><path d="M4 5l5 5" stroke="#ddd" stroke-width="2"/></svg></button>
    <div class="tray"><button aria-label="Autodesk trusted file"><svg viewBox="0 0 16 16"><path d="M1 2h9l3 3v7H1z" fill="#3989bd" stroke="#222"/><path d="M2 8h11v5H2z" fill="#f0e172"/><path d="M7 11l3 4 5-7" stroke="#54a83b" stroke-width="2"/></svg></button><button aria-label="Isolate objects"><svg viewBox="0 0 16 16"><path d="M6 11C1 7 3 1 8 1s7 6 2 10z" fill="#ffef90" stroke="#eee"/><path d="M6 12h4M6 14h4"/></svg></button></div>
    <button class="drop" aria-label="Status bar menu"><i class="tri"></i></button>
    <button aria-label="Clean screen"><svg viewBox="0 0 16 16"><path class="w" d="M2 2h13v12H2z"/><path d="M2 3h13" stroke-width="2"/></svg></button>
  </div>
</footer>

<footer class="taskbar">
  <button aria-label="Start"><svg viewBox="0 0 24 24"><path d="M5 7l6-1v6H5zM12 6l8-1v7h-8zM5 13h6v6l-6-1zM12 13h8v7l-8-1z" fill="#111" stroke="none"/></svg></button>
  <button aria-label="Task view"><svg viewBox="0 0 24 24"><path d="M3 4v3h10V4M3 9.500h10v5H3zM3 20v-3h10v3M16.500 4v16M15 9h3v3h-3z" stroke="#222"/></svg></button>
  <button aria-label="Store"><svg viewBox="0 0 24 24"><path d="M8 6V2h8v4" stroke="#333" stroke-width="1.500"/><path d="M1 5h22l-1 17H2z" fill="#303030" stroke="none"/><path d="M7 9h4v4H7z" fill="#e15237" stroke="none"/><path d="M12 9h4v4h-4z" fill="#81b93c" stroke="none"/><path d="M7 14h4v4H7z" fill="#3197d4" stroke="none"/><path d="M12 14h4v4h-4z" fill="#efb72d" stroke="none"/></svg></button>
  <button aria-label="Mail"><svg viewBox="0 0 24 24"><path d="M0 9l12-8 12 8v13H0z" fill="#075bae" stroke="none"/><path d="M3 8h18v7H3z" fill="#fff" stroke="none"/><path d="M0 9l12 7L24 9v13H0z" fill="#20aee6" stroke="none"/><path d="M0 22l12-7 12 7z" fill="#53c4ee" stroke="none"/></svg></button>
  <button class="run" aria-label="File Explorer"><svg viewBox="0 0 24 24"><path d="M2 3h8l2 3h10v15H2z" fill="#ddb143" stroke="none"/><path d="M2 7h20v14H2z" fill="#f6db77" stroke="none"/><path d="M5 22v-7l3-3h8l3 3v7h-4v-5H9v5z" fill="#4c9bc8" stroke="none"/></svg></button>
  <button class="run active" aria-label="AutoCAD"><svg viewBox="0 0 24 24"><path d="M1 1h22v22H1z" fill="url(#redtile)" stroke="none"/><path d="M12 3L5 16c2 2 4 1 5-1h4c1 2 3 3 6 1z" fill="#620911" stroke="none"/><path d="M12 10l-2 3h3z" fill="#cb2b34" stroke="none"/></svg></button>
  <button class="run" aria-label="Filmora"><svg viewBox="0 0 24 24"><path d="M1 1h22v22H1z" fill="#27373d" stroke="none"/><path d="M10 5l3 3-3 3-3-3z" fill="#fff" stroke="none"/><path d="M14 8l4 4-7 7-4-4z" fill="#48dfbd" stroke="none"/></svg></button>
  <div class="systray">
    <button aria-label="Show hidden icons"><svg viewBox="0 0 16 16"><path d="M3 10l5-5 5 5"/></svg></button>
    <button aria-label="Battery"><svg viewBox="0 0 16 16"><path d="M5 6h9v5H5z" fill="#222"/><path d="M15.500 7v3M1 3v2M3 3v2M0 5h4v2L3 8H1L0 7zM2 8v3h2"/></svg></button>
    <button aria-label="Wi-Fi"><svg viewBox="0 0 16 16"><path d="M2 14C2 8 7 3 14 3M5 14c0-5 4-8 9-8M8 14c0-3 3-5 6-5"/><circle class="k" cx="12" cy="13" r="1.500"/></svg></button>
    <button aria-label="Volume"><svg viewBox="0 0 16 16"><path d="M1 6h3l4-4v12l-4-4H1zM10 5c2 2 2 4 0 6M12 3c3 3 3 7 0 10"/><path d="M14 2c3 3 3 9 0 12" stroke="#bbb"/></svg></button>
    <span class="lang">ENG</span>
    <time><bdo dir="ltr">05:39 م</bdo><bdo class="date" dir="ltr">٢٠٢١/٠٢/٠١</bdo></time>
    <button aria-label="Notifications"><svg viewBox="0 0 16 16"><path d="M1 2h14v10h-5l-3 3v-3H1z" fill="#111"/><path d="M3 5h9M3 7h9M3 9h6" stroke="#eee"/><circle cx="12" cy="12" r="3" fill="#222" stroke="#aaa"/></svg></button>
  </div>
</footer>
</body>
</html>
```
FILE: styles.css
```css
* { box-sizing: border-box; }
body { margin: 0; min-height: 100vh; display: flex; flex-direction: column; background: #656565; color: #111; font: 11px/16px Roboto, "Noto Sans", sans-serif; overflow: hidden; height: 100vh; }
button, select, input { font: inherit; color: inherit; border: 0; background: none; padding: 0; margin: 0; }
button { display: flex; align-items: center; justify-content: center; white-space: nowrap; }
svg { display: block; width: 16px; height: 16px; flex: none; fill: none; stroke: #5c5c5c; overflow: visible; }
.sprite { position: absolute; width: 0; height: 0; }
.w { fill: #f7f7f7; }
.k { fill: #111; stroke: none; }
.n { fill: #eee; stroke: #444; }
.bl { stroke: #1e7195; fill: #1e7195; }
.b { stroke: #2383b5; }
.bf { stroke: #2177a2; fill: #b6e2f2; }
.o { fill: #eba21d; stroke: #b97b18; stroke-width: 0.5; }
.g { fill: #777; stroke: #777; }
.off { opacity: 0.45; }
.tri { border: 3px solid transparent; border-top: 4px solid #333; border-bottom: 0; flex: none; }

header { flex: none; position: relative; }
.titlebar { height: 23px; background: #fff; display: flex; align-items: center; padding: 0 16px 0 466px; }
h1 { margin: 0; font-size: 11px; font-weight: 400; flex: 1; white-space: nowrap; }
.wincontrols { display: flex; gap: 27px; }
.wincontrols svg { stroke: #888; }
.appbutton { position: absolute; z-index: 2; left: 0; top: 0; width: 39px; height: 39px; border: 1px solid #111; border-radius: 1px; background: linear-gradient(#d0d0d0, #8a8a8a 60%, #aaa); gap: 2px; }
.appbutton svg { width: 26px; height: 28px; }
.menubar { height: 19px; display: flex; align-items: center; gap: 23px; padding: 0 2px 0 51px; background: linear-gradient(#a0a0a0, #858585 50%, #656565); border-top: 1px solid #666; color: #f4f4f4; text-shadow: 0 1px 1px #444; }
.doccontrols { margin-left: auto; display: flex; }
.doccontrols svg { stroke: #262626; stroke-width: 2; }
.filetabs { height: 26px; position: relative; display: flex; align-items: center; padding-left: 30px; background: linear-gradient(#a5a5a5, #929292); }
.tabshape { position: absolute; left: 15px; top: 4px; width: 130px; height: 22px; fill: #bebebe; stroke: #ccc; }
.filetab, .fileclose, .newtab { position: relative; }
.filetab { width: 82px; justify-content: flex-start; }
.fileclose svg { stroke: #777; stroke-width: 2; }
.newtab { margin-left: 13px; }
.newtab svg { width: 22px; height: 16px; }

.toolbars { flex: none; padding: 3px 0 4px; display: flex; flex-direction: column; gap: 2px; background: #626262; }
.row { display: flex; }
.bar { height: 23px; display: flex; align-items: stretch; background: #eee; border: 1px solid #484848; flex: none; }
.bar > button { flex: 1; }
.grip { flex: 0 0 9px; background: repeating-linear-gradient(#222 0 1px, transparent 1px 3px) 3px 4px / 4px 13px no-repeat #666; }
.sep { flex: none; width: 6px; background: linear-gradient(#888, #888) 2px 2px / 1px 17px no-repeat; }
.bar > button.drop { flex: 0 0 12px; }
.standard { width: 605px; }
.styles { width: 562px; }
.workspace { width: 216px; }
.layers { width: 378px; }
.props { width: 545px; }
.helpkey { border: 1px solid #444; width: 14px; height: 15px; font-weight: 700; line-height: 14px; font-size: 13px; }
.combo { position: relative; display: flex; align-items: center; padding: 0 14px 0 5px; background: #e1e1e1; border: 1px solid #ccc; min-width: 0; }
.combo select { appearance: none; flex: 1; min-width: 0; height: 100%; opacity: 1; outline: 0; }
.combo::after { content: ""; position: absolute; right: 4px; top: 6px; width: 5px; height: 5px; border: solid #555; border-width: 0 1px 1px 0; transform: rotate(45deg); }
.styles .combo { width: 111px; padding-left: 4px; }
.styles .combo.indent { padding-left: 38px; }
.styles .combo.leader { padding-left: 25px; }
.styles .combo.dimstyle { padding-left: 15px; }
.workspace .combo { width: 163px; padding-left: 6px; }
.layers .combo { width: 281px; padding-left: 1px; gap: 1px; }
.layers .combo svg { width: 15px; height: 15px; }
.swatch { width: 10px; height: 10px; background: #fff; border: 1px solid #222; flex: none; margin-right: 3px; }
.props .p1 { width: 139px; padding-left: 2px; }
.props .p2 { width: 149px; padding-left: 3px; }
.props .p3 { width: 118px; padding-left: 4px; }
.props .p4 { width: 112px; padding-left: 8px; }
.ltype { width: 33px; height: 1px; background: #222; margin-right: 4px; flex: none; }
.ltype.long { width: 57px; }
.disabled { background: #c9c9c9; color: #888; }
.disabled::after { border-color: #999; }

main { flex: 1; min-height: 0; display: flex; padding: 0 2px 4px 1px; background: #626262; }
.tools { flex: none; width: 22px; margin-right: 4px; display: grid; grid-template-rows: 8px repeat(23, minmax(0, 1fr)); border: solid #484848; border-width: 0 1px; overflow: hidden; }
.tools + .tools { margin-right: 6px; }
.tools button { background: #ededed; min-height: 0; }
.tophandle { background: repeating-linear-gradient(90deg, #333 0 1px, transparent 1px 2px) 4px 3px / 12px 3px no-repeat #626262; border: 1px solid #444; }
.dims { display: flex; flex-direction: column; margin: 0 1px 0 5px; }
.dims .tophandle { flex: 0 0 8px; }
.dims button { flex: 1 1 0; }
.dims hr { flex: 0 0 6px; margin: 0; border: 0; background: linear-gradient(#999, #999) 2px 2px / 18px 1px no-repeat #ededed; }
.dims .cut { flex: 0 0 12px; overflow: hidden; }

.drawing { flex: 1; min-width: 0; display: grid; grid-template: minmax(0, 1fr) 17px / minmax(0, 1fr) 16px; border: solid #999; border-width: 1px 2px 0 0; background: #eee; }
.canvas { position: relative; background: #212830; overflow: hidden; }
.plan { width: 100%; height: 100%; }
.lines { stroke: #d5d9dc; shape-rendering: crispEdges; }
.axis { stroke: #c4c8cb; }
.viewlabel { position: absolute; left: 3px; top: 6px; display: flex; color: #d5d9dc; font-size: 12px; }
.viewports { position: absolute; right: 11px; top: 8px; height: 21px; width: 221px; display: flex; background: #eee; }
.viewports .grip { flex-basis: 7px; }
.viewports > button { width: 22px; }
.viewports .combo { flex: 1; margin: 0; background: #f5f5f5; border: 2px solid #fff; }
.viewports .combo::after { border-color: #bbb; }
.viewports .closex { width: 8px; background: #555; color: #fff; font-weight: 700; line-height: 8px; align-items: flex-start; }
.viewcube { position: absolute; right: 10px; top: 21px; width: 90px; height: 76px; color: #b7bec4; font: 700 13px/16px "Liberation Sans", sans-serif; }
.viewcube svg { width: 90px; height: 76px; stroke: #444c54; stroke-width: 8; }
.viewcube > :not(svg) { position: absolute; }
.top { left: 29px; top: 17px; width: 33px; height: 33px; border: 6px solid #b2b5ba; background: #a5a8ad; color: #4a4e53; font-size: 9px; }
.west { left: 3px; top: 26px; }
.east { right: 4px; top: 26px; }
.south { left: 41px; top: 62px; }
.wcs { position: absolute; right: 33px; top: 112px; width: 45px; height: 15px; border: 1px solid #707880; border-radius: 4px; background: #8f969e; color: #42494f; font: 11px/13px "Liberation Sans", sans-serif; justify-content: flex-start; padding-left: 3px; }
.vscroll { display: flex; flex-direction: column; align-items: center; }
.vscroll svg, .hscroll svg { stroke-width: 2; }
.vscroll .thumb { width: 14px; height: 16px; background: #cdcdcd; margin-top: auto; margin-bottom: 141px; }
.layouts { grid-column: 1 / 3; display: flex; font: 11px/15px "Liberation Sans", sans-serif; background: #f0f0f0; }
.navs { display: flex; width: 56px; }
.navs button { flex: 1; border-right: 1px solid #bbb; }
.navs svg { width: 13px; height: 13px; }
.ltab { position: relative; z-index: 0; width: 51px; }
.ltab::before { content: ""; position: absolute; z-index: -1; inset: 0 0 0 3px; border-right: 1px solid #444; transform: skewX(-25deg); }
.ltab.model { width: 50px; color: #fff; }
.ltab.model::before { background: #212830; transform: none; inset: 0; clip-path: polygon(0 0, 100% 0, 86% 100%, 14% 100%); }
.hscroll { margin-left: auto; width: 417px; display: flex; align-items: center; padding-right: 16px; }
.hscroll .split { width: 5px; height: 13px; background: #cdcdcd; }
.hscroll .left { margin-right: auto; }
.hscroll .thumb { width: 16px; height: 13px; background: #cdcdcd; }

.command { flex: none; display: flex; height: 53px; border-bottom: 1px solid #333; }
.cmdside { width: 21px; padding-top: 3px; display: flex; flex-direction: column; align-items: center; gap: 5px; background: linear-gradient(#777, #444); }
.cmdside svg { stroke: #eee; width: 14px; height: 14px; }
.dots { width: 16px; height: 5px; background: repeating-linear-gradient(90deg, #aaa 0 2px, transparent 2px 3px); }
.cmdmain { flex: 1; display: flex; flex-direction: column; }
.history { background: #c8c8c8; border-top: 1px solid #999; border-bottom: 1px solid #888; padding: 2px 2px 1px; font: 11px/14px "DejaVu Sans Mono", monospace; }
.history p { margin: 0; }
.prompt { flex: 1; display: flex; align-items: center; background: #fff; padding-left: 5px; }
.prompt button { gap: 3px; margin-right: 6px; }
.prompt svg { width: 14px; height: 14px; }
.prompt .tri { border-top-color: #888; }
.prompt input { flex: 1; font: italic 11px/16px "DejaVu Sans Mono", monospace; }
.prompt input::placeholder { color: #999; opacity: 1; }

.status { flex: none; height: 22px; display: flex; background: linear-gradient(#666, #888); }
.coords { width: 178px; padding-left: 12px; line-height: 24px; color: #959595; font-family: "Liberation Sans", sans-serif; font-size: 10px; }
.modes { display: flex; width: 309px; }
.modes button { flex: 1; }
.status button { border-right: 1px solid #777; background: linear-gradient(#b8b8b8, #999); }
.status .on { background: linear-gradient(#dcf4f7, #a9d8e1); }
.status svg { width: 15px; height: 15px; }
.statusright { margin-left: auto; display: flex; }
.statusright button { width: 20px; }
.statusright .modelbtn { width: 43px; }
.statusright .scale { width: 45px; gap: 1px; }
.statusright .scale .tri { margin-left: 2px; }
.space { width: 11px; }
.space.thin { width: 6px; }
.tray { display: flex; width: 46px; border: 1px solid #555; }
.tray button { flex: 1; border: 0; }
.statusright .off { opacity: 1; }
.statusright .off svg { opacity: 0.4; }
.statusright .drop { width: 15px; }
.statusright button:last-child { width: 22px; }
.statusright .tray button:last-child { width: 20px; }

.taskbar { flex: none; height: 37px; display: flex; padding-right: 22px; background: #eee; border-top: 1px solid #f8f8f8; }
.taskbar > button { width: 46px; }
.taskbar > button svg { width: 24px; height: 24px; }
.run { border: solid transparent; border-width: 0 4px; background: linear-gradient(#25dc70, #25dc70) 0 100% / 100% 3px no-repeat; background-clip: padding-box; }
.run.active { border-width: 0; background: linear-gradient(#25dc70, #25dc70) 0 100% / 100% 3px no-repeat #f8f8f8; }
.systray { margin-left: auto; display: flex; align-items: center; gap: 7px; color: #222; }
.systray svg { stroke: #222; }
time { display: flex; flex-direction: column; align-items: center; width: 54px; margin: 0 6px 0 4px; font: 11px/16px Roboto, "DejaVu Sans", sans-serif; }
.date { font-size: 10px; }
```
